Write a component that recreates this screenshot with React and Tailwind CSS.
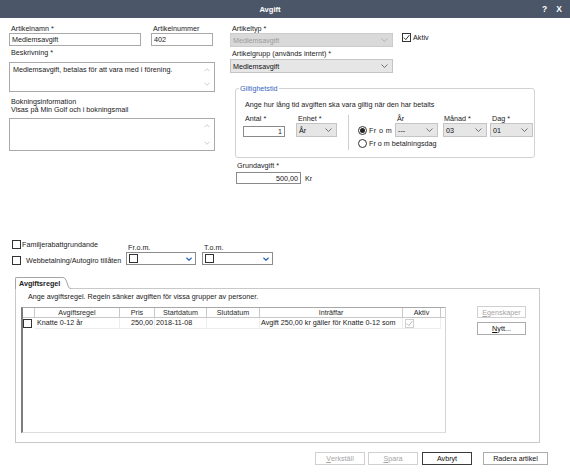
import React from "react";

function Chevron({ color = "#6b6b6b", w = 7, h = 4, sw = 0.8 }) {
  return (
    <svg width={w} height={h} viewBox="0 0 7 4" className="shrink-0">
      <polyline points="0.5,0.5 3.5,3.5 6.5,0.5" fill="none" stroke={color} strokeWidth={sw} />
    </svg>
  );
}

function ChevronUp({ color = "#b5b5b5" }) {
  return (
    <svg width="6" height="4" viewBox="0 0 7 4" className="shrink-0">
      <polyline points="0.5,3.5 3.5,0.5 6.5,3.5" fill="none" stroke={color} strokeWidth="0.8" />
    </svg>
  );
}

function Check({ color = "#222", size = 7 }) {
  return (
    <svg width={size} height={size} viewBox="0 0 7 7">
      <polyline points="0.8,3.6 2.8,5.6 6.3,1.2" fill="none" stroke={color} strokeWidth="0.9" />
    </svg>
  );
}

function Checkbox({ checked, light }) {
  return (
    <span
      className={`flex h-[9px] w-[9px] shrink-0 items-center justify-center border bg-white ${
        light ? "border-[#cfcfcf]" : "border-[#333333]"
      }`}
    >
      {checked && <Check color={light ? "#b0b0b0" : "#222"} />}
    </span>
  );
}

function Radio({ checked }) {
  return (
    <span className="flex h-[9px] w-[9px] shrink-0 items-center justify-center rounded-full border border-[#333333] bg-white">
      {checked && <span className="h-[5px] w-[5px] rounded-full bg-[#222222]" />}
    </span>
  );
}

function Label({ children, className = "" }) {
  return <div className={`h-[9px] whitespace-nowrap pl-[2px] leading-[9px] ${className}`}>{children}</div>;
}

function Select({ value, className = "", disabled }) {
  return (
    <div
      className={`flex h-[14px] items-center justify-between border pl-[2px] pr-[4px] ${
        disabled ? "border-[#cccccc] bg-[#d9d9d9] text-[#9b9b9b]" : "border-[#c4c4c4] bg-[#e6e6e6] text-[#111111]"
      } ${className}`}
    >
      <span className="whitespace-nowrap">{value}</span>
      <Chevron color={disabled ? "#a8a8a8" : "#555555"} />
    </div>
  );
}

function TextArea({ text, className = "" }) {
  return (
    <div className={`flex border border-[#a9a9a9] bg-white ${className}`}>
      <div className="flex-1 pl-[3px] pt-[2px] leading-[9px]">{text}</div>
      <div className="flex w-[14px] flex-col items-center justify-between pb-[5px] pt-[5px]">
        <ChevronUp />
        <Chevron color="#b5b5b5" w={6} />
      </div>
    </div>
  );
}

function DatePicker({ className = "" }) {
  return (
    <div className={`flex h-[13px] items-center justify-between border border-[#8c8c8c] bg-white pl-[2px] pr-[3px] ${className}`}>
      <Checkbox />
      <Chevron color="#2f63b5" w={6} sw={1.4} />
    </div>
  );
}

function Btn({ children, className = "", disabled, dark }) {
  return (
    <div
      className={`flex items-center justify-center border bg-white leading-[9px] ${
        disabled
          ? "border-[#d0d0d0] text-[#a5a5a5]"
          : dark
          ? "border-[#3a3a3a] text-[#111111]"
          : "border-[#acacac] text-[#111111]"
      } ${className}`}
    >
      {children}
    </div>
  );
}

export default function App() {
  return (
    <div className="flex h-[472px] w-[570px] flex-col overflow-hidden bg-white font-['Liberation_Sans',Arial,sans-serif] text-[7.2px] leading-[9px] text-[#1a1a1a]">
      {/* Title bar */}
      <div className="flex h-[18px] shrink-0 items-center bg-[#4b5669] font-bold text-white">
        <div className="flex-1 text-center text-[7.6px]">Avgift</div>
        <div className="flex w-[30px] gap-[9px] pl-[2px] text-[8.5px]">
          <span>?</span>
          <span>X</span>
        </div>
      </div>

      {/* Top area */}
      <div className="flex pl-[9px] pt-[6px]">
        {/* Left column */}
        <div className="flex w-[206px] flex-col">
          <div className="flex">
            <div className="w-[132px]">
              <Label>Artikelnamn *</Label>
              <div className="flex h-[13px] items-center border border-[#a9a9a9] pl-[2px]">Medlemsavgift</div>
            </div>
            <div className="ml-[10px] w-[62px]">
              <Label>Artikelnummer</Label>
              <div className="flex h-[13px] items-center border border-[#a9a9a9] pl-[2px]">402</div>
            </div>
          </div>
          <Label className="mt-[2px]">Beskrivning *</Label>
          <TextArea className="mt-[5px] h-[30px]" text="Medlemsavgift, betalas för att vara med i förening." />
          <div className="mt-[6px] pl-[2px] leading-[8px]">
            Bokningsinformation
            <br />
            Visas på Min Golf och i bokningsmail
          </div>
          <TextArea className="mt-[4px] h-[33px]" text="" />
        </div>

        {/* Right column */}
        <div className="ml-[15px] flex flex-col">
          <Label>Artikeltyp *</Label>
          <div className="flex items-start">
            <Select className="w-[163px]" disabled value="Medlemsavgift" />
            <div className="ml-[9px] flex items-center gap-[2px]">
              <Checkbox checked />
              <span>Aktiv</span>
            </div>
          </div>
          <Label className="mt-[2px]">Artikelgrupp (används internt) *</Label>
          <Select className="mt-px w-[163px]" value="Medlemsavgift" />

          <fieldset className="ml-[5px] mt-[11px] w-[300px] rounded-[3px] border border-[#d2d2d2] pb-[7px]">
            <legend className="ml-[3px] px-[1px] leading-[9px] text-[#3466bd]">Giltighetstid</legend>
            <div className="pl-[7px] pt-[7px]">
              <div className="pl-[2px]">Ange hur lång tid avgiften ska vara giltig när den har betalts</div>
              <div className="mt-[5px] flex items-start">
                <div className="w-[42px]">
                  <Label>Antal *</Label>
                  <div className="mt-[3px] flex h-[11px] items-center justify-end border border-[#8a8a8a] pr-[2px]">1</div>
                </div>
                <div className="ml-[11px] w-[41px]">
                  <Label>Enhet *</Label>
                  <Select className="w-[41px]" value="År" />
                </div>
                <div className="ml-[11px] mt-px h-[35px] w-px bg-[#cfcfcf]" />
                <div className="ml-[9px] flex flex-col">
                  <div className="flex items-end">
                    <div className="flex h-[14px] w-[37px] items-center gap-[2px]">
                      <Radio checked />
                      <span className="tracking-[0.4px]">Fr o m</span>
                    </div>
                    <div className="w-[43px]">
                      <Label>År</Label>
                      <Select className="w-[43px]" value="---" />
                    </div>
                    <div className="ml-[5px] w-[44px]">
                      <Label className="pl-px">Månad *</Label>
                      <Select className="w-[44px]" value="03" />
                    </div>
                    <div className="ml-[3px] w-[43px]">
                      <Label>Dag *</Label>
                      <Select className="w-[43px]" value="01" />
                    </div>
                  </div>
                  <div className="mt-[2px] flex h-[9px] items-center gap-[2px]">
                    <Radio />
                    <span>Fr o m betalningsdag</span>
                  </div>
                </div>
              </div>
            </div>
          </fieldset>

          <Label className="ml-[6px] mt-[3px] pl-px">Grundavgift *</Label>
          <div className="ml-[6px] mt-[2px] flex items-center">
            <div className="flex h-[12px] w-[65px] items-center justify-end border border-[#8a8a8a] pr-[2px]">500,00</div>
            <span className="ml-[4px]">Kr</span>
          </div>
        </div>
      </div>

      {/* Checkbox options */}
      <div className="mt-[56px] flex items-end pl-[12px]">
        <div className="flex w-[114px] flex-col gap-[7px]">
          <div className="flex h-[9px] items-center gap-px">
            <Checkbox />
            <span className="whitespace-nowrap">Familjerabattgrundande</span>
          </div>
          <div className="flex h-[9px] items-center gap-[5px]">
            <Checkbox />
            <span className="whitespace-nowrap">Webbetalning/Autogiro tillåten</span>
          </div>
        </div>
        <div className="w-[70px]">
          <div className="h-[8px] pl-[2px] leading-[8px]">Fr.o.m.</div>
          <DatePicker className="w-[70px]" />
        </div>
        <div className="ml-[6px] w-[71px]">
          <div className="h-[8px] pl-[2px] leading-[8px]">T.o.m.</div>
          <DatePicker className="w-[71px]" />
        </div>
      </div>

      {/* Tab */}
      <div className="relative z-10 -mb-px ml-[15px] mt-[12px] flex items-end">
        <div className="h-[12px] rounded-tl-[2px] border-l border-t border-[#a5a5a5] bg-white pl-[3px] pr-px font-bold leading-[11px]">
          Avgiftsregel
        </div>
        <svg width="10" height="12" viewBox="0 0 10 12" className="shrink-0">
          <path d="M0 0.5 L2 0.5 Q4 0.5 5.5 4 L7.5 10 Q8.2 11.5 10 11.5 L10 12 L0 12 Z" fill="white" />
          <path d="M0 0.5 L2 0.5 Q4 0.5 5.5 4 L7.5 10 Q8.2 11.5 10 11.5" fill="none" stroke="#a5a5a5" strokeWidth="1" />
        </svg>
      </div>

      {/* Tab panel */}
      <div className="ml-[15px] h-[155px] w-[525px] border border-[#c9c9c9]">
        <div className="pl-[12px] pt-[3px]">Ange avgiftsregel. Regeln sänker avgiften för vissa grupper av personer.</div>
        <div className="ml-[5px] mt-[6px] flex items-start">
          {/* Table */}
          <div className="h-[126px] w-[425px] border-b border-l-2 border-r border-t border-b-[#dcdcdc] border-l-[#7c7c7c] border-r-[#d4d4d4] border-t-[#a8a8a8] bg-white">
            <div className="flex h-[10px] border-b border-[#c8c8c8] text-center leading-[9px] text-[#2a2a2a]">
              <div className="w-[12px] border-r border-[#c8c8c8]" />
              <div className="w-[85px] border-r border-[#c8c8c8]">Avgiftsregel</div>
              <div className="w-[35px] border-r border-[#c8c8c8]">Pris</div>
              <div className="w-[52px] border-r border-[#c8c8c8]">Startdatum</div>
              <div className="w-[53px] border-r border-[#c8c8c8]">Slutdatum</div>
              <div className="w-[143px] border-r border-[#c8c8c8]">Inträffar</div>
              <div className="w-[38px] border-r border-[#c8c8c8]">Aktiv</div>
              <div className="flex-1" />
            </div>
            <div className="flex h-[11px] items-center leading-[10px]">
              <div className="flex h-full w-[12px] items-center">
                <Checkbox />
              </div>
              <div className="h-full w-[85px] border-b border-r border-[#ededed] pl-[2px]">Knatte 0-12 år</div>
              <div className="h-full w-[35px] border-b border-r border-[#ededed] pr-px text-right">250,00</div>
              <div className="h-full w-[52px] border-b border-r border-[#ededed] pl-px">2018-11-08</div>
              <div className="h-full w-[53px] border-b border-r border-[#ededed]" />
              <div className="h-full w-[143px] whitespace-nowrap border-b border-r border-[#ededed] pl-px">
                Avgift 250,00 kr gäller för Knatte 0-12 som
              </div>
              <div className="flex h-full w-[38px] items-center border-b border-r border-[#ededed] pl-[2px]">
                <Checkbox checked light />
              </div>
            </div>
          </div>
          {/* Side buttons */}
          <div className="-mt-px ml-[31px] flex flex-col gap-[4px]">
            <Btn disabled className="h-[12px] w-[49px]">
              <span className="underline">E</span>genskaper
            </Btn>
            <Btn className="h-[13px] w-[49px]">
              <span className="underline">N</span>ytt...
            </Btn>
          </div>
        </div>
      </div>

      {/* Bottom buttons */}
      <div className="mt-[9px] flex justify-end pr-[22px]">
        <Btn disabled className="h-[13px] w-[50px]">
          <span className="underline">V</span>erkställ
        </Btn>
        <Btn disabled className="ml-[3px] h-[13px] w-[50px]">
          <span className="underline">S</span>para
        </Btn>
        <Btn dark className="ml-[4px] h-[13px] w-[50px]">
          Avbryt
        </Btn>
        <Btn className="ml-[11px] h-[13px] w-[65px]">Radera artikel</Btn>
      </div>
    </div>
  );
}
